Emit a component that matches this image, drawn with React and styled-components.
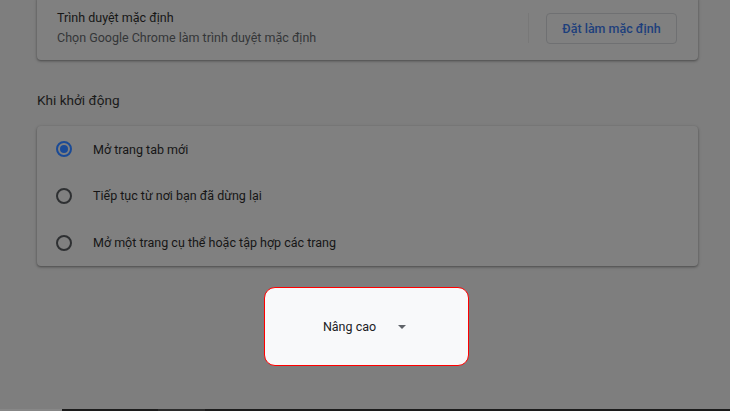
import React from "react";
import styled, { createGlobalStyle } from "styled-components";

const Global = createGlobalStyle`
  html, body { margin: 0; padding: 0; }
  body {
    background: #7e7e7e;
    font-family: Roboto, "Noto Sans", "Liberation Sans", sans-serif;
    overflow: hidden;
  }
`;

const Page = styled.div`
  height: 411px;
  width: 730px;
  display: flex;
  flex-direction: column;
  overflow: hidden;
`;

const Column = styled.div`
  width: 661px;
  margin-left: 37px;
  display: flex;
  flex-direction: column;
`;

const Card = styled.div`
  background: #808080;
  border-radius: 4px;
  margin-top: ${(p) => p.$top || 0}px;
  box-shadow: 0 1px 2px rgba(0, 0, 0, 0.28), 0 1px 3px 1px rgba(0, 0, 0, 0.12);
  display: flex;
  flex-direction: column;
`;

const DefaultRow = styled.div`
  height: 64px;
  display: flex;
  align-items: center;
  padding: 0 21px 0 20px;
`;

const RowText = styled.div`
  flex: 1;
  display: flex;
  flex-direction: column;
`;

const Title = styled.div`
  font-size: 12.5px;
  line-height: 20px;
  color: #161616;
`;

const Sub = styled.div`
  font-size: 12.5px;
  line-height: 20px;
  color: #343638;
`;

const Separator = styled.div`
  width: 1px;
  height: 30px;
  background: #787878;
  margin-right: 17px;
`;

const OutlineButton = styled.div`
  height: 31px;
  width: 131px;
  box-sizing: border-box;
  border: 1px solid #6f7072;
  border-radius: 4px;
  display: flex;
  align-items: center;
  justify-content: center;
  color: #1d3f7c;
  font-size: 12.5px;
  font-weight: 500;
`;

const Heading = styled.div`
  margin-top: 28px;
  margin-bottom: 14px;
  line-height: 24px;
  font-size: 13.6px;
  color: #1a1a1a;
`;

const RadioRow = styled.div`
  height: 46.67px;
  display: flex;
  align-items: center;
  padding-left: 19px;
  font-size: 12.5px;
  color: #161616;
`;

const Radio = styled.div`
  width: 16px;
  height: 16px;
  box-sizing: border-box;
  border-radius: 50%;
  border: 2px solid ${(p) => (p.$checked ? "#1a4a96" : "#2e3032")};
  display: flex;
  align-items: center;
  justify-content: center;
  margin-right: 21px;
  &::after {
    content: "";
    display: ${(p) => (p.$checked ? "block" : "none")};
    width: 8px;
    height: 8px;
    border-radius: 50%;
    background: #1a4a96;
  }
`;

const AdvancedWrap = styled.div`
  display: flex;
  padding-left: 264px;
  margin-top: 21px;
`;

const AdvancedButton = styled.div`
  width: 205px;
  height: 79px;
  box-sizing: border-box;
  background: #f8f9fa;
  border: 1px solid #ff0000;
  border-radius: 11px;
  display: flex;
  align-items: center;
  justify-content: center;
  gap: 22px;
  padding-right: 4px;
  font-size: 12.5px;
  color: #202124;
`;

const Footer = styled.div`
  margin-top: auto;
  height: 2px;
  display: flex;
`;

const Seg = styled.div`
  width: ${(p) => p.$w}px;
  flex: ${(p) => (p.$grow ? 1 : "none")};
  background: ${(p) => p.$c};
`;

const Caret = () => (
  <svg width="8" height="4" viewBox="0 0 8 4" style={{ marginTop: 1 }}>
    <path d="M0 0 L8 0 L4 4 Z" fill="#5f6368" />
  </svg>
);

export default function App() {
  const options = [
    { label: "Mở trang tab mới", checked: true },
    { label: "Tiếp tục từ nơi bạn đã dừng lại", checked: false },
    { label: "Mở một trang cụ thể hoặc tập hợp các trang", checked: false },
  ];
  return (
    <>
      <Global />
      <Page>
        <Column>
          <Card $top={-4}>
            <DefaultRow>
              <RowText>
                <Title>Trình duyệt mặc định</Title>
                <Sub>Chọn Google Chrome làm trình duyệt mặc định</Sub>
              </RowText>
              <Separator />
              <OutlineButton>Đặt làm mặc định</OutlineButton>
            </DefaultRow>
          </Card>
          <Heading>Khi khởi động</Heading>
          <Card>
            {options.map((o) => (
              <RadioRow key={o.label}>
                <Radio $checked={o.checked} />
                {o.label}
              </RadioRow>
            ))}
          </Card>
        </Column>
        <AdvancedWrap>
          <AdvancedButton>
            <span>Nâng cao</span>
            <Caret />
          </AdvancedButton>
        </AdvancedWrap>
        <Footer>
          <Seg $w={62} $c="#878787" />
          <Seg $w={96} $c="#1c1c1c" />
          <Seg $w={47} $c="#2b2b2b" />
          <Seg $grow $c="#1c1c1c" />
        </Footer>
      </Page>
    </>
  );
}
